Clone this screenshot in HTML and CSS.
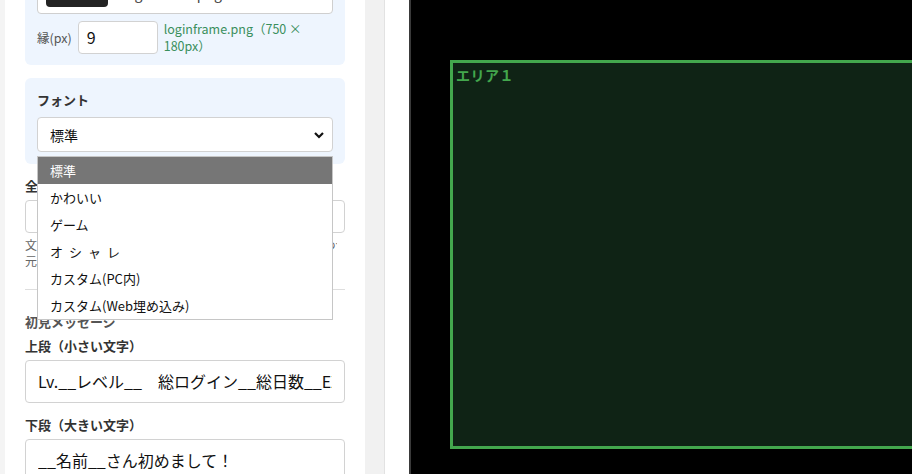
FILE: index.html
```html
<html>
  <head>
    <link rel="stylesheet" href="styles.css">
    <title>ログインフレーム設定</title>
  </head>
  <body>
    <div class="app">
      <div class="gutter"></div>
      <aside class="sidebar">
        <section class="panel panel-frame">
          <div class="file-input">
            <span class="file-button"></span>
            <span class="file-name">loginframe.png</span>
          </div>
          <div class="frame-row">
            <span class="row-label">縁(px)</span>
            <div class="input input-small">9</div>
            <span class="file-info">loginframe.png（750 × 180px）</span>
          </div>
        </section>

        <section class="panel panel-font">
          <div class="label">フォント</div>
          <div class="select">
            <span>標準</span>
            <svg class="chevron" width="12" height="12" viewBox="0 0 12 12">
              <path d="M2 4 L6 8 L10 4" fill="none" stroke="#111" stroke-width="2.2"/>
            </svg>
          </div>
          <ul class="dropdown">
            <li class="selected">標準</li>
            <li>かわいい</li>
            <li>ゲーム</li>
            <li class="spaced">オシャレ</li>
            <li>カスタム(PC内)</li>
            <li>カスタム(Web埋め込み)</li>
          </ul>
        </section>

        <div class="field-color">
          <div class="label">全体の文字色</div>
          <div class="input input-short">ー</div>
          <p class="hint">文字の色を指定します。空欄にするとフレーム画像に合わせた色<br>元の画像の明るさから自動で決まります。</p>
        </div>

        <hr class="divider">

        <div class="label label-muted">初見メッセージ</div>
        <div class="field">
          <div class="label">上段（小さい文字）</div>
          <div class="input input-text"><span>Lv.__レベル__　総ログイン__総日数__EXP__経験値__</span></div>
        </div>
        <div class="field">
          <div class="label">下段（大きい文字）</div>
          <div class="input input-text"><span>__名前__さん初めまして！</span></div>
        </div>
      </aside>
      <div class="scroll-track"></div>
      <main class="stage">
        <div class="canvas">
          <div class="area">
            <span class="area-name">エリア１</span>
          </div>
        </div>
      </main>
    </div>
  </body>
</html>
```

FILE: styles.css
```css
body {
  margin: 0;
  background-color: #fff;
  color: #333;
  font-family: "Noto Sans CJK JP", "Noto Sans", sans-serif;
  font-size: 13px;
  overflow: hidden;
}
.app {
  display: flex;
  height: 474px;
  overflow: hidden;
}
.gutter {
  width: 5px;
  background-color: #f4f4f4;
  flex: none;
}
.sidebar {
  width: 320px;
  padding: 0 20px;
  flex: none;
  position: relative;
  display: flex;
  flex-direction: column;
}
.scroll-track {
  width: 19px;
  flex: none;
  background-color: #f1f1f1;
  border-right: 1px solid #e2e2e2;
}
.stage {
  flex: 1;
  padding-left: 24px;
  display: flex;
}
.canvas {
  flex: 1;
  position: relative;
  background-color: #000;
  border-left: 2px solid #3a3a3a;
}
.area {
  position: absolute;
  left: 39px;
  top: 60px;
  width: 600px;
  height: 383px;
  border: 3px solid #43a74d;
  background-color: #0f2315;
}
.area-name {
  display: block;
  margin: 3px 0 0 3px;
  color: #43a74d;
  font-weight: bold;
  font-size: 14px;
  line-height: 18px;
  letter-spacing: 0.5px;
}

.panel {
  background-color: #eef5fe;
  border-radius: 6px;
  padding: 12px;
}
.panel-frame {
  margin-top: -36px;
  padding-bottom: 11px;
}
.panel-font {
  margin-top: 13px;
  position: relative;
}
.file-input {
  height: 38px;
  box-sizing: border-box;
  border: 1px solid #cfcfcf;
  border-radius: 4px;
  background-color: #fff;
  display: flex;
  align-items: flex-end;
  padding: 0 8px 6px;
  gap: 14px;
}
.file-button {
  width: 62px;
  height: 26px;
  background-color: #232323;
  border-radius: 4px;
}
.file-name {
  font-size: 14px;
  line-height: 14px;
  margin-bottom: 7px;
  color: #444;
}
.frame-row {
  display: flex;
  align-items: center;
  gap: 6px;
  margin-top: 6px;
}
.row-label {
  color: #555;
  font-size: 12.5px;
}
.file-info {
  flex: 1;
  color: #3a8f5c;
  font-size: 12.5px;
  line-height: 17px;
}
.input {
  background-color: #fff;
  border: 1px solid #d2d2d2;
  border-radius: 4px;
  box-sizing: border-box;
  font-size: 16px;
  color: #111;
  white-space: nowrap;
  overflow: hidden;
}
.input span {
  display: block;
  overflow: hidden;
}
.input-small {
  width: 80px;
  height: 33px;
  line-height: 31px;
  padding: 0 8px;
}
.input-short {
  height: 33px;
  line-height: 31px;
  padding: 0 10px;
}
.input-text {
  height: 43px;
  line-height: 41px;
  padding: 0 12px;
}
.label {
  font-weight: bold;
  font-size: 13px;
  line-height: 20px;
  color: #333;
}
.label-muted {
  color: #555;
}
.panel-font .label {
  margin-bottom: 7px;
}
.select {
  height: 35px;
  box-sizing: border-box;
  border: 1px solid #d2d2d2;
  border-radius: 4px;
  background-color: #fff;
  display: flex;
  align-items: center;
  justify-content: space-between;
  padding: 0 7px 0 12px;
  font-size: 14px;
  color: #111;
}
.chevron {
  display: block;
}
.dropdown {
  position: absolute;
  z-index: 2;
  left: 12px;
  right: 12px;
  top: 78px;
  margin: 0;
  padding: 0;
  list-style: none;
  background-color: #fff;
  border: 1px solid #c6c6c6;
}
.dropdown li {
  height: 27px;
  line-height: 27px;
  padding-left: 12px;
  font-size: 13px;
  color: #111;
}
.dropdown li.selected {
  background-color: #767676;
  color: #fff;
}
.dropdown li.spaced {
  letter-spacing: 6px;
}
.field-color {
  margin-top: 12px;
}
.field-color .label,
.field .label {
  margin-bottom: 4px;
}
.field {
  margin-top: 4px;
}
.field + .field {
  margin-top: 12px;
}
.hint {
  width: 312px;
  margin: 4px 0 0;
  color: #666;
  font-size: 12px;
  line-height: 16px;
  white-space: nowrap;
  overflow: hidden;
}
.divider {
  width: 100%;
  border: none;
  border-top: 1px solid #dedede;
  margin: 20px 0 22px;
}
```
